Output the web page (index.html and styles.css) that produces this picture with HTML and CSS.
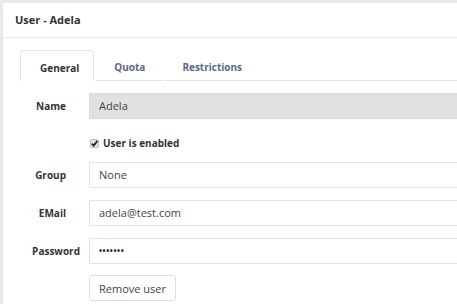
FILE: index.html
```html
<!DOCTYPE html>
<html>
<head>
<meta charset="utf-8">
<link rel="stylesheet" href="styles.css">
</head>
<body>
<div class="panel">
  <div class="panel-header">User - Adela</div>
  <div class="panel-body">
    <ul class="tabs">
      <li class="tab active">General</li>
      <li class="tab">Quota</li>
      <li class="tab">Restrictions</li>
      <li class="tab-fill"></li>
    </ul>
    <form class="form">
      <div class="row row-name">
        <label class="label">Name</label>
        <div class="field readonly">Adela</div>
      </div>
      <div class="row row-check">
        <span class="label"></span>
        <span class="check">
          <svg class="check-box" width="9" height="9" viewBox="0 0 9 9"><rect x="0.5" y="0.5" width="8" height="8" rx="1.5" fill="#e6e6e6" stroke="#bdbdbd"/><path d="M1.8 4.6 L3.7 6.6 L7.4 1.9" fill="none" stroke="#222" stroke-width="1.7"/></svg>
          <span class="check-text">User is enabled</span>
        </span>
      </div>
      <div class="row row-gap-small">
        <label class="label">Group</label>
        <div class="field">None</div>
      </div>
      <div class="row">
        <label class="label">EMail</label>
        <div class="field">adela@test.com</div>
      </div>
      <div class="row">
        <label class="label label-wide">Password</label>
        <div class="field field-pass">•••••••</div>
      </div>
      <div class="row row-btn">
        <span class="label"></span>
        <button type="button" class="btn">Remove user</button>
      </div>
    </form>
  </div>
</div>
</body>
</html>
```
FILE: styles.css
```css
html, body {
  margin: 0;
  padding: 0;
  overflow: hidden;
}
body {
  background: #e8eaed;
  font-family: "Open Sans", "DejaVu Sans", sans-serif;
  color: #333;
  height: 304px;
}
.panel {
  margin: 3px 0 0 3px;
  background: #fff;
  height: 301px;
}
.panel-header {
  height: 35px;
  line-height: 34px;
  padding-left: 12px;
  font-size: 11px;
  font-weight: 700;
  color: #333;
  border-bottom: 1px solid #eaecee;
  box-sizing: border-box;
}
.panel-body {
  padding-top: 12px;
}
.tabs {
  list-style: none;
  margin: 0 0 0 17px;
  padding: 0;
  display: flex;
  height: 31px;
}
.tab {
  padding: 0 17px 0 18px;
  margin-right: 2px;
  font-size: 10px;
  font-weight: 700;
  color: #5a6a85;
  line-height: 12px;
  padding-top: 11px;
  box-sizing: border-box;
  border-bottom: 1px solid #e3e3e3;
}
.tab.active {
  color: #333;
  border: 1px solid #e3e3e3;
  border-bottom-color: transparent;
  border-radius: 3px 3px 0 0;
  padding-left: 19px;
  padding-right: 14px;
}
.tab-fill {
  flex: 1;
  border-bottom: 1px solid #e3e3e3;
  margin-left: -2px;
}
.form {
  display: flex;
  flex-direction: column;
}
.row {
  display: flex;
  align-items: center;
  margin-top: 12px;
}
.row-name {
  margin-top: 12px;
}
.row-check {
  height: 24px;
}
.row-gap-small {
  margin-top: 7px;
}
.row-btn {
  margin-top: 11px;
}
.label {
  width: 86px;
  flex: none;
  box-sizing: border-box;
  text-align: right;
  padding-right: 23px;
  font-size: 10px;
  font-weight: 700;
  color: #333;
}
.label-wide {
  padding-right: 9px;
}
.field {
  flex: 1;
  height: 26px;
  box-sizing: border-box;
  border: 1px solid #e2e2e2;
  border-right: none;
  border-radius: 2px 0 0 2px;
  padding-left: 9px;
  font-size: 11px;
  line-height: 24px;
  color: #444;
}
.field.readonly {
  background: #e1e1e1;
  border-color: #dadada;
}
.field-pass {
  font-size: 8px;
  font-weight: 700;
  letter-spacing: 0.6px;
  color: #222;
}
.check {
  display: flex;
  align-items: center;
  gap: 4px;
  margin-left: 1px;
}
.check-box {
  display: block;
}
.check-text {
  font-size: 10px;
  font-weight: 700;
  color: #333;
}
.btn {
  height: 26px;
  padding: 0 9px;
  background: #fff;
  border: 1px solid #dedede;
  border-radius: 3px;
  font-family: "Open Sans", "DejaVu Sans", sans-serif;
  font-size: 11px;
  color: #444;
}
```
